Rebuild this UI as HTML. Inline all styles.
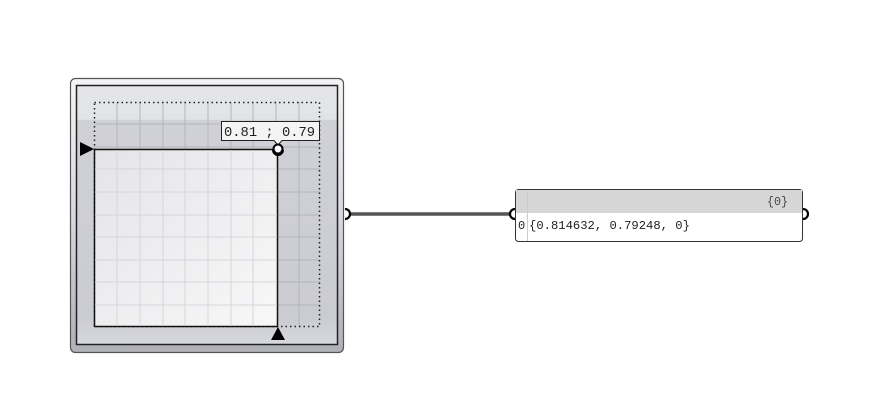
<!DOCTYPE html>
<html><head><style>
html,body{margin:0;padding:0;background:#fff;width:891px;height:415px;overflow:hidden}
svg{display:block}
text{font-family:"Liberation Mono",monospace}
</style></head><body>
<svg width="891" height="415" viewBox="0 0 891 415" xmlns="http://www.w3.org/2000/svg">
<defs>
<linearGradient id="outer" x1="0" y1="0" x2="0" y2="1">
<stop offset="0" stop-color="#f4f4f6"/><stop offset="0.5" stop-color="#d8d9de"/><stop offset="1" stop-color="#b0b1b8"/>
</linearGradient>
<linearGradient id="wh" x1="0" y1="0" x2="1" y2="1">
<stop offset="0" stop-color="#e8e8eb"/><stop offset="0.5" stop-color="#f4f4f5"/><stop offset="1" stop-color="#ffffff"/>
</linearGradient>
<linearGradient id="inner" x1="0" y1="0" x2="0" y2="1">
<stop offset="0" stop-color="#e4e5e9"/><stop offset="0.13" stop-color="#e2e3e7"/><stop offset="0.135" stop-color="#d0d1d7"/><stop offset="0.9" stop-color="#cbccd2"/><stop offset="1" stop-color="#d8d9de"/>
</linearGradient>
</defs>
<line x1="349" y1="214" x2="511" y2="214" stroke="#555" stroke-width="3.5"/>
<rect x="70.5" y="78.5" width="273" height="274" rx="5" fill="url(#outer)" stroke="#555" stroke-width="1.2"/>
<rect x="76.5" y="85.5" width="261" height="259" fill="url(#inner)" stroke="#222" stroke-width="1.5"/>
<g stroke="#b4b5bc" stroke-width="1">
<line x1="117" y1="102" x2="117" y2="327"/><line x1="140" y1="102" x2="140" y2="327"/><line x1="163" y1="102" x2="163" y2="327"/><line x1="185" y1="102" x2="185" y2="327"/><line x1="208" y1="102" x2="208" y2="327"/><line x1="231" y1="102" x2="231" y2="327"/><line x1="253" y1="102" x2="253" y2="327"/><line x1="276" y1="102" x2="276" y2="327"/><line x1="299" y1="102" x2="299" y2="327"/>
<line x1="94" y1="124" x2="320" y2="124"/><line x1="94" y1="147" x2="320" y2="147"/><line x1="94" y1="169" x2="320" y2="169"/><line x1="94" y1="192" x2="320" y2="192"/><line x1="94" y1="215" x2="320" y2="215"/><line x1="94" y1="237" x2="320" y2="237"/><line x1="94" y1="260" x2="320" y2="260"/><line x1="94" y1="282" x2="320" y2="282"/><line x1="94" y1="305" x2="320" y2="305"/>
</g>
<rect x="94.5" y="102.5" width="225" height="224" fill="none" stroke="#222" stroke-width="1.5" stroke-dasharray="1.5 3"/>
<rect x="94.5" y="149.5" width="183" height="177" fill="url(#wh)" fill-opacity="0.85" stroke="#111" stroke-width="1.5"/>
<g stroke="#d6d6da" stroke-width="1">
<line x1="117" y1="150" x2="117" y2="326"/><line x1="140" y1="150" x2="140" y2="326"/><line x1="163" y1="150" x2="163" y2="326"/><line x1="185" y1="150" x2="185" y2="326"/><line x1="208" y1="150" x2="208" y2="326"/><line x1="231" y1="150" x2="231" y2="326"/><line x1="253" y1="150" x2="253" y2="326"/>
<line x1="95" y1="169" x2="277" y2="169"/><line x1="95" y1="192" x2="277" y2="192"/><line x1="95" y1="215" x2="277" y2="215"/><line x1="95" y1="237" x2="277" y2="237"/><line x1="95" y1="260" x2="277" y2="260"/><line x1="95" y1="282" x2="277" y2="282"/><line x1="95" y1="305" x2="277" y2="305"/>
</g>
<polygon points="80,142 94,149 80,156" fill="#000"/>
<polygon points="278,327 285,340 271,340" fill="#000"/>
<path d="M221.5 121.5 H319.5 V140.5 H282 L278 145 L274 140.5 H221.5 Z" fill="#f4f4f4" stroke="#222" stroke-width="1"/>
<text x="224" y="136" font-size="13.8" fill="#222">0.81 ; 0.79</text>
<circle cx="278" cy="149" r="4.5" fill="#fff" stroke="#000" stroke-width="2"/>
<path d="M273.5 150 A4.5 4.5 0 0 0 282.5 150" fill="none" stroke="#000" stroke-width="3"/>
<path d="M345 209 A5 5 0 0 1 345 219" fill="none" stroke="#000" stroke-width="2.2"/>
<rect x="515.5" y="189.5" width="287" height="52" rx="3" fill="#fff" stroke="#333" stroke-width="1"/>
<rect x="516" y="190" width="286" height="23" fill="#d6d6d6"/>
<line x1="527.5" y1="190" x2="527.5" y2="241" stroke="#ccc" stroke-width="1"/>
<text x="767" y="205" font-size="11.7" fill="#444">{0}</text>
<text x="518" y="229" font-size="12" fill="#222">0</text>
<text x="529" y="229" font-size="12.2" fill="#222">{0.814632, 0.79248, 0}</text>
<path d="M515 209 A5 5 0 0 0 515 219" fill="none" stroke="#000" stroke-width="2.2"/>
<path d="M803 209 A5 5 0 0 1 803 219" fill="none" stroke="#000" stroke-width="2.2"/>
</svg>
</body></html>
